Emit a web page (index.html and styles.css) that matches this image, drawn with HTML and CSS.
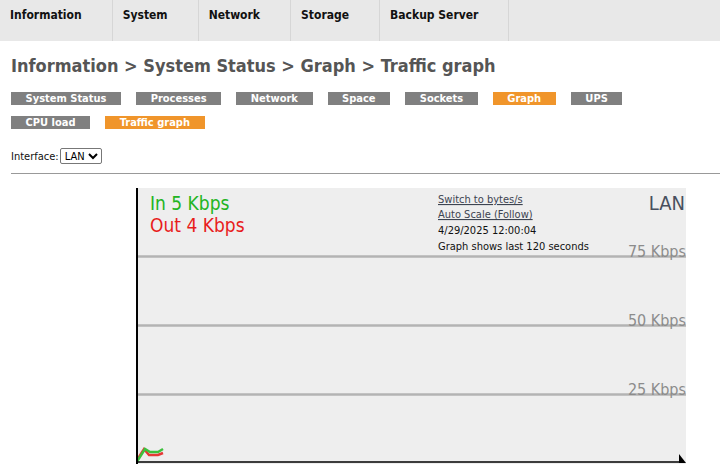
FILE: index.html
```html
<!DOCTYPE html>
<html>
<head>
<meta charset="utf-8">
<link rel="stylesheet" href="styles.css">
</head>
<body>
<div class="nav">
  <div class="nav-item">Information</div>
  <div class="nav-item">System</div>
  <div class="nav-item">Network</div>
  <div class="nav-item">Storage</div>
  <div class="nav-item">Backup Server</div>
</div>
<div class="content">
  <h1 class="title">Information &gt; System Status &gt; Graph &gt; Traffic graph</h1>
  <div class="tabs">
    <span class="tab">System Status</span>
    <span class="tab">Processes</span>
    <span class="tab">Network</span>
    <span class="tab">Space</span>
    <span class="tab">Sockets</span>
    <span class="tab active">Graph</span>
    <span class="tab">UPS</span>
  </div>
  <div class="tabs">
    <span class="tab">CPU load</span>
    <span class="tab active">Traffic graph</span>
  </div>
  <div class="iface">
    <label class="iface-label">Interface:</label><select class="iface-select"><option>LAN</option></select>
  </div>
  <hr class="rule">
  <div class="graph-wrap">
    <svg class="graph" width="550" height="276" viewBox="0 0 550 276">
      <rect x="0" y="0" width="550" height="276" fill="#eeeeee"/>
      <line x1="0" y1="68.5" x2="550" y2="68.5" stroke="#b3b3b3" stroke-width="2.5"/>
      <line x1="0" y1="137.5" x2="550" y2="137.5" stroke="#b3b3b3" stroke-width="2.5"/>
      <line x1="0" y1="206.5" x2="550" y2="206.5" stroke="#b3b3b3" stroke-width="2.5"/>
      <text class="g-scale" x="550" y="69" text-anchor="end">75 Kbps</text>
      <text class="g-scale" x="550" y="138" text-anchor="end">50 Kbps</text>
      <text class="g-scale" x="550" y="207" text-anchor="end">25 Kbps</text>
      <text class="g-name" x="549" y="22" text-anchor="end">LAN</text>
      <text class="g-in" x="14" y="22">In 5 Kbps</text>
      <text class="g-out" x="14" y="44">Out 4 Kbps</text>
      <text class="g-link" x="302" y="15">Switch to bytes/s</text>
      <text class="g-link" x="302" y="30">Auto Scale (Follow)</text>
      <text class="g-info" x="302" y="46">4/29/2025 12:00:04</text>
      <text class="g-info" x="302" y="62">Graph shows last 120 seconds</text>
      <polyline points="1,272 8,261 13,267 22,267 27,265" fill="none" stroke="#e53935" stroke-width="2.5"/>
      <polyline points="0,275 9,261 14,264 22,264 27,261" fill="none" stroke="#3cc13c" stroke-width="2.5"/>
      <line x1="1" y1="0" x2="1" y2="276" stroke="#000" stroke-width="2"/>
      <line x1="0" y1="274" x2="545" y2="274" stroke="#000" stroke-width="1.5"/>
      <polygon points="543,266 550,275 543,275" fill="#000"/>
    </svg>
  </div>
</div>
</body>
</html>
```
FILE: styles.css
```css
html, body {
  margin: 0;
  padding: 0;
  background: #ffffff;
  font-family: "DejaVu Sans Condensed", "DejaVu Sans", sans-serif;
}
.nav {
  display: flex;
  height: 41px;
  background: #e8e8e8;
}
.nav-item {
  padding: 8px 30px 0 10px;
  font-size: 12px;
  font-weight: bold;
  color: #111;
  border-right: 1px solid #d6d6d6;
}
.content {
  padding: 0 0 0 11px;
}
.title {
  margin: 14px 0 15px 0;
  font-size: 18px;
  font-weight: bold;
  color: #555555;
  line-height: 22px;
}
.tabs {
  display: flex;
  gap: 15px;
  margin-bottom: 11px;
  height: 13px;
}
.tab {
  display: block;
  background: #808080;
  color: #ffffff;
  font-size: 11px;
  font-weight: bold;
  line-height: 13px;
  height: 13px;
  padding: 0 14.6px;
  text-align: center;
}
.tab.active {
  background: #f0952b;
}
.iface {
  display: flex;
  align-items: center;
  margin-top: 19px;
  height: 16px;
}
.iface-label {
  font-size: 11px;
  color: #111;
}
.iface-select {
  font-family: "DejaVu Sans Condensed", "DejaVu Sans", sans-serif;
  font-size: 11px;
  height: 16px;
  padding: 0;
  margin: 0 0 0 1px;
  border: 1px solid #777;
  border-radius: 2px;
  background: #fff;
}
.rule {
  margin: 9px 0 0 0;
  border: 0;
  border-top: 1px solid #999;
  height: 0;
}
.graph-wrap {
  padding: 14px 0 0 125px;
}
.graph {
  display: block;
}
.g-scale {
  font-family: "DejaVu Sans Condensed", "DejaVu Sans", sans-serif;
  font-size: 16px;
  fill: #8c8c8c;
}
.g-name {
  font-family: "DejaVu Sans Condensed", "DejaVu Sans", sans-serif;
  font-size: 20px;
  fill: #48505e;
}
.g-in {
  font-family: "DejaVu Sans Condensed", "DejaVu Sans", sans-serif;
  font-size: 19px;
  fill: #22b422;
}
.g-out {
  font-family: "DejaVu Sans Condensed", "DejaVu Sans", sans-serif;
  font-size: 19px;
  fill: #e81c1c;
}
.g-link {
  font-family: "DejaVu Sans Condensed", "DejaVu Sans", sans-serif;
  font-size: 11px;
  fill: #3d4451;
  text-decoration: underline;
}
.g-info {
  font-family: "DejaVu Sans Condensed", "DejaVu Sans", sans-serif;
  font-size: 11px;
  fill: #111;
}
```
